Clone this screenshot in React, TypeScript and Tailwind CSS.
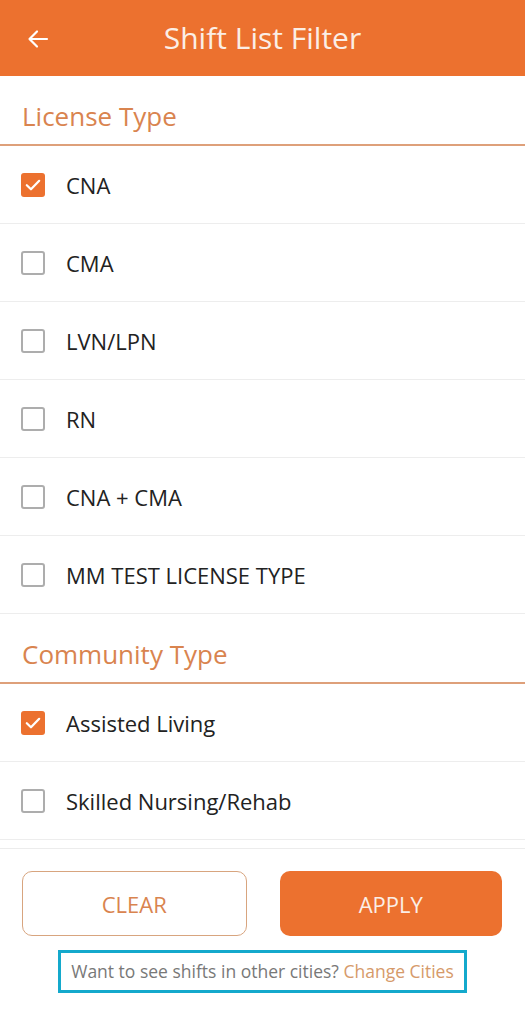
import React from "react";

const license = [
  { label: "CNA", checked: true },
  { label: "CMA", checked: false },
  { label: "LVN/LPN", checked: false },
  { label: "RN", checked: false },
  { label: "CNA + CMA", checked: false },
  { label: "MM TEST LICENSE TYPE", checked: false },
];

const community = [
  { label: "Assisted Living", checked: true },
  { label: "Skilled Nursing/Rehab", checked: false },
  { label: "Memory Care", checked: false },
];

function Box({ checked }: { checked: boolean }) {
  if (checked) {
    return (
      <div className="w-[24px] h-[24px] rounded-[3px] bg-[#ec712f] flex items-center justify-center shrink-0">
        <svg width="18" height="18" viewBox="0 0 16 16" fill="none">
          <path d="M2.5 8.2 L6.2 11.8 L13.5 4.3" stroke="#fff" strokeWidth="2" strokeLinecap="round" strokeLinejoin="round" />
        </svg>
      </div>
    );
  }
  return <div className="w-[24px] h-[24px] rounded-[3px] border-[2.5px] border-[#adadad] shrink-0" />;
}

function Row({ label, checked }: { label: string; checked: boolean }) {
  return (
    <div className="h-[78px] shrink-0 flex items-center pl-[21px] border-b border-[#ededed]">
      <Box checked={checked} />
      <span className="ml-[21px] text-[22px] leading-[30px] text-[#222222]">{label}</span>
    </div>
  );
}

function Heading({ title }: { title: string }) {
  return (
    <div className="h-[70px] shrink-0 flex items-start pt-[23px] pl-[22px] border-b-[2px] border-[#dea07a]">
      <span className="text-[26px] leading-[34px] text-[#d9844f]">{title}</span>
    </div>
  );
}

export default function App() {
  return (
    <div
      className="w-[525px] h-[1024px] flex flex-col bg-white overflow-hidden"
      style={{ fontFamily: '"Open Sans", "Noto Sans", sans-serif' }}
    >
      <div className="h-[76px] shrink-0 bg-[#ec712f] relative flex items-center justify-center">
        <svg className="absolute left-[26px] top-[27px]" width="24" height="24" viewBox="0 0 24 24" fill="none">
          <path d="M21 12 H3.5 M11 4.5 L3.5 12 L11 19.5" stroke="#fff" strokeWidth="2.2" strokeLinecap="round" strokeLinejoin="round" />
        </svg>
        <span className="text-[30px] text-[#fbeee6] leading-[40px]">Shift List Filter</span>
      </div>
      <div className="flex-1 overflow-hidden flex flex-col">
        <Heading title="License Type" />
        {license.map((r) => (
          <Row key={r.label} {...r} />
        ))}
        <Heading title="Community Type" />
        {community.map((r) => (
          <Row key={r.label} {...r} />
        ))}
      </div>
      <div className="h-[176px] shrink-0 border-t border-[#ececec] bg-white flex flex-col items-center">
        <div className="w-full flex gap-[33px] pl-[22px] pr-[23px] pt-[22px]">
          <button className="flex-1 h-[65px] rounded-[10px] border border-[#d8a57f] bg-white text-[22px] leading-[30px] text-[#d9844f]">
            CLEAR
          </button>
          <button className="flex-1 h-[65px] rounded-[10px] bg-[#ec712f] text-[22px] leading-[30px] text-[#fbeee6]">
            APPLY
          </button>
        </div>
        <div className="mt-[14px] w-[409px] h-[43px] border-[3px] border-[#14a9cc] flex items-center justify-center text-[17.5px] whitespace-nowrap">
          <span className="text-[#787878]">Want to see shifts in other cities?&nbsp;</span>
          <span className="text-[#d69a6a]">Change Cities</span>
        </div>
      </div>
    </div>
  );
}
